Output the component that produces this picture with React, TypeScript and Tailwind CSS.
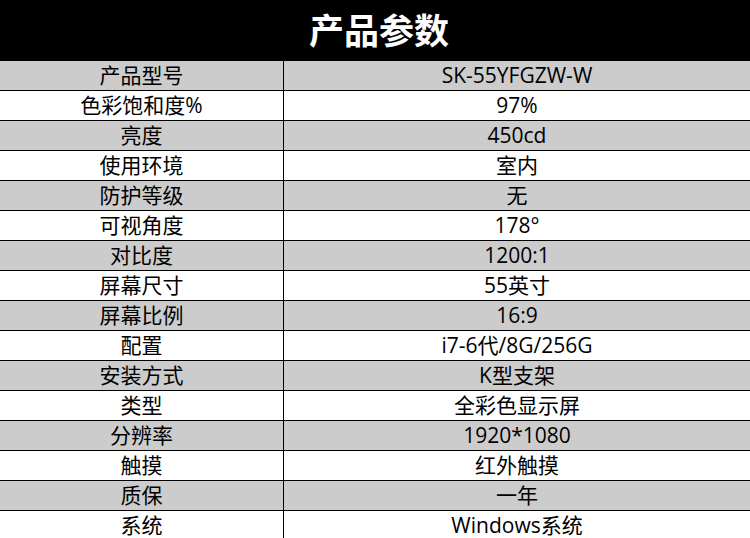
const rows: [string, string][] = [
  ["产品型号", "SK-55YFGZW-W"],
  ["色彩饱和度%", "97%"],
  ["亮度", "450cd"],
  ["使用环境", "室内"],
  ["防护等级", "无"],
  ["可视角度", "178°"],
  ["对比度", "1200:1"],
  ["屏幕尺寸", "55英寸"],
  ["屏幕比例", "16:9"],
  ["配置", "i7-6代/8G/256G"],
  ["安装方式", "K型支架"],
  ["类型", "全彩色显示屏"],
  ["分辨率", "1920*1080"],
  ["触摸", "红外触摸"],
  ["质保", "一年"],
  ["系统", "Windows系统"],
];

export default function App() {
  return (
    <div className="w-[750px] h-[538px] overflow-hidden bg-white font-['Open_Sans','Noto_Sans_CJK_SC',sans-serif] text-black">
      <div className="h-[61px] bg-black flex items-center justify-center">
        <span className="text-[35px] font-bold text-white leading-none font-['Noto_Sans_CJK_SC',sans-serif] pb-[4px] pl-[8px]">
          产品参数
        </span>
      </div>
      {rows.map(([k, v], i) => (
        <div
          key={k}
          className={`flex h-[30px] border-b border-black ${i % 2 === 0 ? "bg-[#cccccc]" : "bg-white"}`}
        >
          <div className="w-[284px] border-r border-black flex items-center justify-center text-[21px] leading-none">
            {k}
          </div>
          <div className="flex-1 flex items-center justify-center text-[21px] leading-none">
            {v}
          </div>
        </div>
      ))}
    </div>
  );
}
